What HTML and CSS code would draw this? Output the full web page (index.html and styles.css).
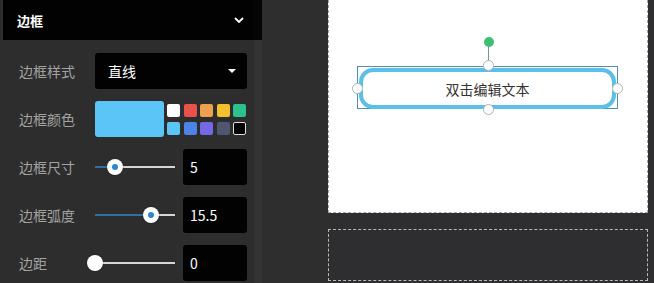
FILE: index.html
```html
<!DOCTYPE html>
<html lang="zh-CN">
<head>
    <meta charset="UTF-8">
    <title>边框设置</title>
    <link rel="stylesheet" href="styles.css">
</head>
<body>
    <div class="panel">
        <div class="panel-main">
            <div class="panel-head">
                <span>边框</span>
                <svg class="chevron" width="10" height="6" viewBox="0 0 10 6"><path d="M1 1l4 4 4-4" fill="none" stroke="#fff" stroke-width="1.8"/></svg>
            </div>
            <div class="rows">
                <div class="row">
                    <div class="label">边框样式</div>
                    <div class="select">
                        <span>直线</span>
                        <span class="caret"></span>
                    </div>
                </div>
                <div class="row">
                    <div class="label">边框颜色</div>
                    <div class="color-current"></div>
                    <div class="swatches">
                        <span class="sw" style="background:#ffffff"></span>
                        <span class="sw" style="background:#e9524a"></span>
                        <span class="sw" style="background:#eea04f"></span>
                        <span class="sw" style="background:#f4c12e"></span>
                        <span class="sw" style="background:#2cc18f"></span>
                        <span class="sw" style="background:#5ac6f6"></span>
                        <span class="sw" style="background:#4b84e4"></span>
                        <span class="sw" style="background:#7468e4"></span>
                        <span class="sw" style="background:#4f566f"></span>
                        <span class="sw sw-black"></span>
                    </div>
                </div>
                <div class="row">
                    <div class="label">边框尺寸</div>
                    <div class="slider">
                        <div class="track"></div>
                        <div class="fill" style="width:20px"></div>
                        <div class="knob" style="left:20px"><i></i></div>
                    </div>
                    <div class="num">5</div>
                </div>
                <div class="row">
                    <div class="label">边框弧度</div>
                    <div class="slider">
                        <div class="track"></div>
                        <div class="fill" style="width:56px"></div>
                        <div class="knob" style="left:56px"><i></i></div>
                    </div>
                    <div class="num">15.5</div>
                </div>
                <div class="row">
                    <div class="label">边距</div>
                    <div class="slider">
                        <div class="track"></div>
                        <div class="knob" style="left:0px"></div>
                    </div>
                    <div class="num">0</div>
                </div>
            </div>
        </div>
        <div class="scroll-col"></div>
    </div>

    <div class="gap"></div>

    <div class="canvas">
        <div class="paper">
            <div class="rotate-line"></div>
            <div class="rotate-dot"></div>
            <div class="selection">
                <div class="textbox">双击编辑文本</div>
                <span class="handle h-left"></span>
                <span class="handle h-right"></span>
                <span class="handle h-top"></span>
                <span class="handle h-bottom"></span>
            </div>
        </div>
        <div class="next-page"></div>
    </div>
</body>
</html>
```

FILE: styles.css
```css
body {
    margin: 0;
    width: 654px;
    height: 283px;
    overflow: hidden;
    display: flex;
    background-color: #2e2d2f;
    font-family: "Noto Sans CJK SC", "Noto Sans", sans-serif;
}
.panel {
    width: 262px;
    height: 283px;
    display: flex;
    background-color: #2d2d2d;
}
.panel-main {
    width: 254px;
}
.scroll-col {
    width: 8px;
    background: linear-gradient(#050505 0, #050505 40px, #333333 40px);
}
.panel-head {
    margin-left: 3px;
    height: 40px;
    background-color: #020202;
    display: flex;
    align-items: center;
    justify-content: space-between;
    padding: 0 10px 0 14px;
    color: #fff;
    font-size: 13px;
    font-weight: bold;
}
.chevron {
    display: block;
}
.rows {
    padding: 13px 0 0 19px;
    display: flex;
    flex-direction: column;
    gap: 12px;
}
.row {
    height: 36px;
    display: flex;
    align-items: center;
}
.label {
    width: 76px;
    color: #a3a3a3;
    font-size: 14px;
}
.select {
    width: 152px;
    height: 36px;
    box-sizing: border-box;
    background-color: #020202;
    border-radius: 3px;
    display: flex;
    align-items: center;
    justify-content: space-between;
    padding: 0 11px 0 13px;
    color: #fff;
    font-size: 14px;
}
.caret {
    width: 0;
    height: 0;
    border-left: 4px solid transparent;
    border-right: 4px solid transparent;
    border-top: 4px solid #fff;
}
.color-current {
    width: 69px;
    height: 36px;
    border-radius: 3px;
    background-color: #5bc5f8;
}
.swatches {
    margin-left: 3px;
    display: grid;
    grid-template-columns: repeat(5, 13px);
    column-gap: 3.5px;
    row-gap: 5px;
}
.sw {
    width: 13px;
    height: 13px;
    border-radius: 2px;
}
.sw-black {
    box-sizing: border-box;
    background-color: #000;
    border: 1px solid #ddd;
}
.slider {
    position: relative;
    width: 80px;
    height: 36px;
    margin-right: 8px;
}
.track {
    position: absolute;
    left: 0;
    right: 0;
    top: 17px;
    height: 2px;
    background-color: #d6d6d6;
}
.fill {
    position: absolute;
    left: 0;
    top: 17px;
    height: 2px;
    background-color: #2f6ea8;
}
.knob {
    position: absolute;
    top: 10px;
    width: 16px;
    height: 16px;
    margin-left: -8px;
    border-radius: 50%;
    background-color: #fff;
    box-shadow: 0 0 2px rgba(0, 0, 0, 0.4);
    display: flex;
    align-items: center;
    justify-content: center;
}
.knob i {
    width: 6px;
    height: 6px;
    border-radius: 50%;
    background-color: #2f86d0;
}
.num {
    width: 64px;
    height: 36px;
    box-sizing: border-box;
    background-color: #020202;
    border-radius: 3px;
    padding-left: 7px;
    display: flex;
    align-items: center;
    color: #fff;
    font-size: 14px;
}
.gap {
    width: 66px;
    background-color: #2e2e2e;
}
.canvas {
    width: 320px;
    display: flex;
    flex-direction: column;
}
.paper {
    position: relative;
    height: 212px;
    background-color: #fff;
    border: 1px dashed #a8a8a8;
    border-top: none;
}
.next-page {
    margin-top: 16px;
    height: 50px;
    border: 1px dashed #b8b8b8;
}
.rotate-dot {
    position: absolute;
    left: 155px;
    top: 37px;
    width: 10px;
    height: 10px;
    border-radius: 50%;
    background-color: #3fbf73;
}
.rotate-line {
    position: absolute;
    left: 159px;
    top: 45px;
    width: 1px;
    height: 16px;
    background-color: #6b9e84;
}
.selection {
    position: absolute;
    left: 28px;
    top: 66px;
    width: 259px;
    height: 41px;
    border: 1px solid #4c8fb3;
}
.textbox {
    box-sizing: border-box;
    margin: 1px 1px 0 1px;
    height: 41px;
    border: 4px solid #5cbfea;
    border-radius: 14px;
    display: flex;
    align-items: center;
    justify-content: center;
    color: #333;
    font-size: 14px;
}
.handle {
    position: absolute;
    width: 9px;
    height: 9px;
    border-radius: 50%;
    background-color: #fff;
    border: 1px solid #a9b4b8;
}
.h-left { left: -6px; top: 16px; }
.h-right { right: -6px; top: 16px; }
.h-top { left: 125px; top: -7px; }
.h-bottom { left: 125px; bottom: -7px; }
```
